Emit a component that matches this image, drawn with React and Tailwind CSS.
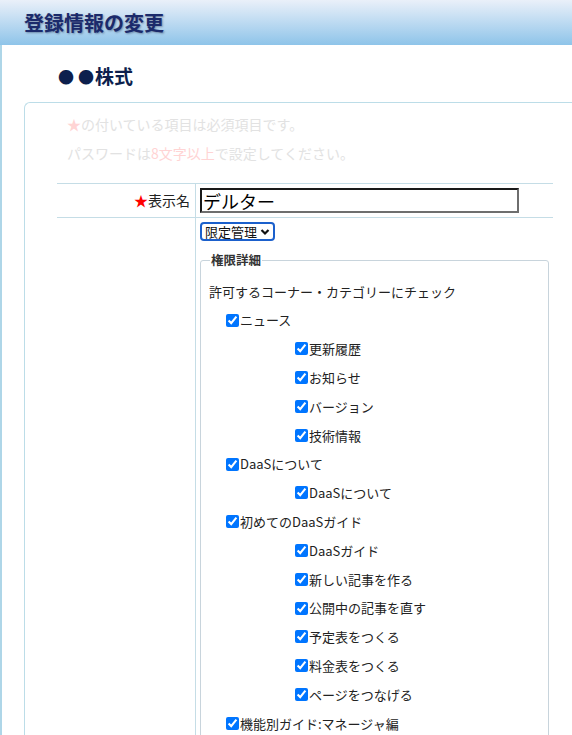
import React from "react";

const items = [
  { level: 1, label: "ニュース" },
  { level: 2, label: "更新履歴" },
  { level: 2, label: "お知らせ" },
  { level: 2, label: "バージョン" },
  { level: 2, label: "技術情報" },
  { level: 1, label: "DaaSについて" },
  { level: 2, label: "DaaSについて" },
  { level: 1, label: "初めてのDaaSガイド" },
  { level: 2, label: "DaaSガイド" },
  { level: 2, label: "新しい記事を作る" },
  { level: 2, label: "公開中の記事を直す" },
  { level: 2, label: "予定表をつくる" },
  { level: 2, label: "料金表をつくる" },
  { level: 2, label: "ページをつなげる" },
  { level: 1, label: "機能別ガイド:マネージャ編" },
];

export default function App() {
  return (
    <div className="w-[572px] h-[735px] overflow-hidden bg-white font-['Noto_Sans_CJK_JP','Noto_Sans',sans-serif] text-[#222]">
      <header className="h-[45px] bg-gradient-to-b from-[#eaf0f9] to-[#8ec4e9] pl-[24px] flex items-center">
        <h1 className="text-[20px] font-bold text-[#1b2a6b] leading-none [text-shadow:1px_1px_2px_rgba(0,0,40,0.35)]">
          登録情報の変更
        </h1>
      </header>
      <div className="border-l-2 border-[#aed6e8] h-[690px]">
        <h2 className="h-[57px] pl-[56px] pt-[4px] flex items-center text-[19px] font-bold text-[#0d1f4d] leading-none">
          <span className="text-[16px] mr-[4px]">●</span>
          <span className="text-[16px] mr-[1px]">●</span>
          株式
        </h2>
        <div className="ml-[22px] border-l border-t border-[#bcdde8] rounded-tl-[6px] pl-[32px] pr-[19px] h-[640px]">
          <div className="pt-[7px] pl-[10px] text-[14px] leading-[29px] text-[#e2e2e2] mb-[15px]">
            <p>
              <span className="text-[#ffd4d4]">★</span>の付いている項目は必須項目です。
            </p>
            <p>
              パスワードは<span className="text-[#ffd4d4]">8文字以上</span>で設定してください。
            </p>
          </div>
          <div className="border-t border-[#c5dde6]">
            <div className="flex border-b border-[#c5dde6]">
              <div className="w-[139px] shrink-0 border-r border-[#c5dde6] flex items-center justify-end pr-[5px] text-[14px]">
                <span className="text-[#ff0000]">★</span>表示名
              </div>
              <div className="pl-[4px] py-[4px]">
                <div className="w-[319px] h-[25px] border-2 border-t-[#1a1a1a] border-l-[#1a1a1a] border-b-[#6e6e6e] border-r-[#6e6e6e] flex items-center pl-[1px] text-[18px] leading-none text-black">
                  デルター
                </div>
              </div>
            </div>
            <div className="flex">
              <div className="w-[139px] shrink-0 border-r border-[#c5dde6] h-[520px]"></div>
              <div className="pl-[4px] pt-[4px] flex-1 pr-[4px]">
                <div className="flex items-center w-[75px] h-[19px] border-2 border-[#1b60cc] rounded-[4px] pl-[3px] text-[13px] leading-none text-[#111]">
                  <span>限定管理</span>
                  <svg className="ml-[3px]" width="10" height="8" viewBox="0 0 10 8">
                    <path d="M1.5 2 L5 5.5 L8.5 2" fill="none" stroke="#111" strokeWidth="2.2" />
                  </svg>
                </div>
                <fieldset className="mt-[10px] border border-[#c8d4dc] rounded-[3px] pl-[8px] pb-[10px]">
                  <legend className="ml-[1px] px-[1px] text-[12.5px] font-bold text-[#333] leading-[18px]">
                    権限詳細
                  </legend>
                  <div className="pt-[8px] text-[13px]">
                    <div className="h-[28.8px] flex items-center">
                      許可するコーナー・カテゴリーにチェック
                    </div>
                    {items.map((it, i) => (
                      <label
                        key={i}
                        className={
                          "h-[28.8px] flex items-center " +
                          (it.level === 1 ? "pl-[17px]" : "pl-[86px]")
                        }
                      >
                        <input
                          type="checkbox"
                          defaultChecked
                          className="w-[13px] h-[13px] accent-[#0075ff]"
                        />
                        <span className="ml-[1px]">{it.label}</span>
                      </label>
                    ))}
                  </div>
                </fieldset>
              </div>
            </div>
          </div>
        </div>
      </div>
    </div>
  );
}
